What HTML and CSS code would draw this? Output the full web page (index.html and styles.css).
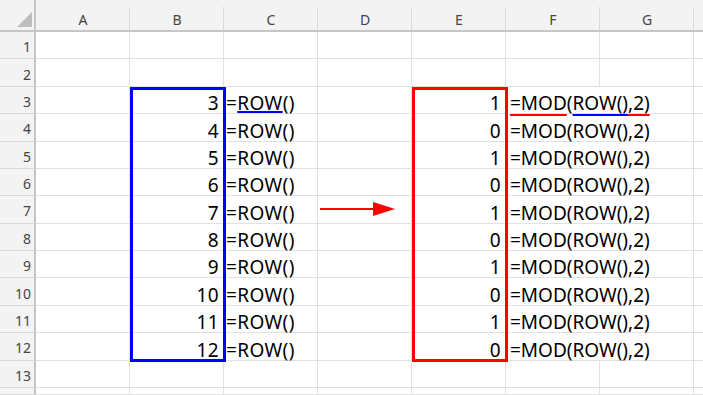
FILE: index.html
```html
<!DOCTYPE html>
<html lang="ja">
<head>
<meta charset="utf-8">
<title>ROW / MOD</title>
<link rel="stylesheet" href="styles.css">
</head>
<body>
<div class="sheet">
  <div class="corner"><svg class="tri" width="34" height="30" viewBox="0 0 34 30"><polygon points="32,12 32,27 17,27" fill="#bdbdbd"/></svg></div>
  <div class="colh">A</div><div class="colh">B</div><div class="colh">C</div><div class="colh">D</div><div class="colh">E</div><div class="colh">F</div><div class="colh">G</div><div class="colh last"></div>

  <div class="rh">1</div><div class="c"></div><div class="c"></div><div class="c"></div><div class="c"></div><div class="c"></div><div class="c"></div><div class="c"></div><div class="c end"></div>
  <div class="rh">2</div><div class="c"></div><div class="c"></div><div class="c"></div><div class="c"></div><div class="c"></div><div class="c"></div><div class="c"></div><div class="c end"></div>

  <div class="rh">3</div><div class="c"></div><div class="c num">3</div><div class="c txt">=<span class="ul ul-blue">ROW</span>()</div><div class="c"></div><div class="c num">1</div><div class="c txt f"><span class="ul ul-red ul-low">=MOD</span>(<span class="ul ul-blue ul-low">ROW()</span><span class="ul ul-red ul-low">,2)</span></div><div class="c end"></div>
  <div class="rh">4</div><div class="c"></div><div class="c num">4</div><div class="c txt">=ROW()</div><div class="c"></div><div class="c num">0</div><div class="c txt f">=MOD(ROW(),2)</div><div class="c end"></div>
  <div class="rh">5</div><div class="c"></div><div class="c num">5</div><div class="c txt">=ROW()</div><div class="c"></div><div class="c num">1</div><div class="c txt f">=MOD(ROW(),2)</div><div class="c end"></div>
  <div class="rh">6</div><div class="c"></div><div class="c num">6</div><div class="c txt">=ROW()</div><div class="c"></div><div class="c num">0</div><div class="c txt f">=MOD(ROW(),2)</div><div class="c end"></div>
  <div class="rh">7</div><div class="c"></div><div class="c num">7</div><div class="c txt">=ROW()</div><div class="c arrow-cell"><svg class="arrow" width="78" height="16" viewBox="0 0 78 16"><line x1="0" y1="8" x2="58" y2="8" stroke="#ff0000" stroke-width="2"/><polygon points="53,1 75,8 53,15" fill="#ff0000"/></svg></div><div class="c num">1</div><div class="c txt f">=MOD(ROW(),2)</div><div class="c end"></div>
  <div class="rh">8</div><div class="c"></div><div class="c num">8</div><div class="c txt">=ROW()</div><div class="c"></div><div class="c num">0</div><div class="c txt f">=MOD(ROW(),2)</div><div class="c end"></div>
  <div class="rh">9</div><div class="c"></div><div class="c num">9</div><div class="c txt">=ROW()</div><div class="c"></div><div class="c num">1</div><div class="c txt f">=MOD(ROW(),2)</div><div class="c end"></div>
  <div class="rh">10</div><div class="c"></div><div class="c num">10</div><div class="c txt">=ROW()</div><div class="c"></div><div class="c num">0</div><div class="c txt f">=MOD(ROW(),2)</div><div class="c end"></div>
  <div class="rh">11</div><div class="c"></div><div class="c num">11</div><div class="c txt">=ROW()</div><div class="c"></div><div class="c num">1</div><div class="c txt f">=MOD(ROW(),2)</div><div class="c end"></div>
  <div class="rh">12</div><div class="c"></div><div class="c num">12</div><div class="c txt">=ROW()</div><div class="c"></div><div class="c num">0</div><div class="c txt f">=MOD(ROW(),2)</div><div class="c end"></div>

  <div class="rh">13</div><div class="c"></div><div class="c"></div><div class="c"></div><div class="c"></div><div class="c"></div><div class="c"></div><div class="c"></div><div class="c end"></div>
  <div class="rh"></div><div class="c"></div><div class="c"></div><div class="c"></div><div class="c"></div><div class="c"></div><div class="c"></div><div class="c"></div><div class="c end"></div>

  <div class="box box-blue"></div>
  <div class="box box-red"></div>
</div>
</body>
</html>
```
FILE: styles.css
```css
html, body {
  margin: 0;
  padding: 0;
  background: #ffffff;
}

body {
  width: 703px;
  height: 395px;
  overflow: hidden;
}

.sheet {
  position: relative;
  display: grid;
  grid-template-columns: 36px repeat(7, 94px) 1fr;
  grid-template-rows: 32px repeat(13, 27.38px) 1fr;
  height: 395px;
  font-family: "Noto Sans", "Noto Sans CJK JP", sans-serif;
  color: #000;
}

.sheet > div {
  box-sizing: border-box;
  min-width: 0;
}

.corner {
  background: #f3f3f3;
  border-right: 2px solid #c6c6c6;
  border-bottom: 2px solid #c6c6c6;
}

.tri {
  display: block;
}

.colh {
  background: linear-gradient(#d9d9d9, #d9d9d9) right 0 top 7px / 1px 100% no-repeat, #f3f3f3;
  border-bottom: 2px solid #c6c6c6;
  font-size: 14px;
  line-height: 14px;
  padding-top: 13px;
  text-align: center;
  color: #444;
}

.colh.last {
  background: #f3f3f3;
}

.rh {
  background: #f3f3f3;
  border-right: 2px solid #c6c6c6;
  border-bottom: 1px solid #d9d9d9;
  display: flex;
  justify-content: flex-end;
  align-items: center;
  padding: 4px 3px 0 0;
  font-size: 14px;
  line-height: 14px;
  color: #444;
}

.c {
  border-right: 1px solid #e1e1e1;
  border-bottom: 1px solid #e1e1e1;
  display: flex;
  align-items: flex-end;
  white-space: nowrap;
  font-size: 19px;
  line-height: 19px;
  letter-spacing: 0.4px;
}

.c.end {
  border-right: none;
}

.num {
  justify-content: flex-end;
  padding-right: 4px;
}

.txt {
  padding-left: 2px;
}

.txt.f {
  grid-column: span 2;
  padding-left: 4px;
  letter-spacing: 0;
}

.ul {
  text-decoration: underline;
  text-decoration-thickness: 2px;
  text-decoration-skip-ink: none;
  text-underline-offset: 1px;
}

.ul-low {
  text-underline-offset: 4px;
}

.ul-blue {
  text-decoration-color: #0000ff;
}

.ul-red {
  text-decoration-color: #ff0000;
}

.arrow-cell {
  align-items: center;
  padding-left: 2px;
}

.arrow {
  display: block;
}

.box {
  position: absolute;
  inset: 0 -2px -1px 0;
  border: 3px solid;
  box-sizing: border-box;
}

.box-blue {
  grid-column: 3 / 4;
  grid-row: 4 / 14;
  border-color: #0000ff;
}

.box-red {
  grid-column: 6 / 7;
  grid-row: 4 / 14;
  border-color: #ff0000;
}
```
